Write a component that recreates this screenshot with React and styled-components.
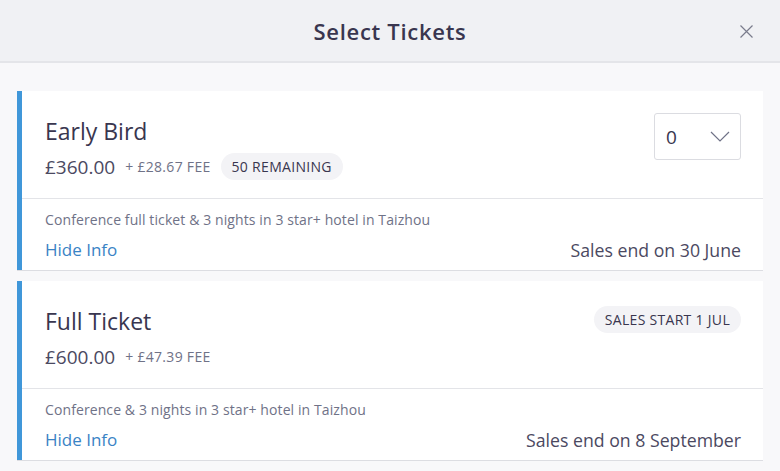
import React from "react";
import styled, { createGlobalStyle } from "styled-components";

const Global = createGlobalStyle`
  html, body { margin: 0; padding: 0; }
  body {
    background: #f8f8fa;
    font-family: "Open Sans", "Liberation Sans", Arial, sans-serif;
    color: #39364f;
    -webkit-font-smoothing: antialiased;
  }
`;

const Page = styled.div`
  width: 780px;
  height: 471px;
  overflow: hidden;
  background: #f8f8fa;
`;

const Header = styled.header`
  height: 61px;
  background: #f0f1f4;
  border-bottom: 2px solid #e4e5e9;
  display: flex;
  align-items: center;
  justify-content: center;
  position: relative;
`;

const Title = styled.h1`
  margin: 0;
  font-size: 22px;
  font-weight: 600;
  letter-spacing: 0.7px;
  color: #39364f;
`;

const Close = styled.button`
  position: absolute;
  right: 26px;
  top: 23px;
  width: 16px;
  height: 16px;
  padding: 0;
  border: 0;
  background: none;
  display: flex;
  align-items: center;
  justify-content: center;
`;

const List = styled.div`
  padding: 28px 17px 0 17px;
  display: flex;
  flex-direction: column;
  gap: 11px;
`;

const Card = styled.div`
  background: #fff;
  border-left: 5px solid #4097d9;
  box-shadow: 0 1px 0 #dcdde2;
`;

const Top = styled.div`
  height: 107px;
  box-sizing: border-box;
  padding: 25px 22px 0 23px;
  display: flex;
  justify-content: space-between;
  align-items: flex-start;
`;

const Info = styled.div`
  display: flex;
  flex-direction: column;
`;

const Name = styled.div`
  font-size: 23px;
  line-height: 30px;
  color: #39364f;
`;

const PriceRow = styled.div`
  margin-top: 7px;
  height: 27px;
  display: flex;
  align-items: center;
`;

const Price = styled.span`
  font-size: 19px;
  color: #4b4961;
`;

const Fee = styled.span`
  margin-left: 10px;
  font-size: 14px;
  letter-spacing: 0.3px;
  color: #6f7287;
`;

const Pill = styled.span`
  display: inline-flex;
  align-items: center;
  height: 27px;
  padding: 0 11px;
  border-radius: 14px;
  background: #f3f3f6;
  font-size: 14px;
  letter-spacing: 0.3px;
  color: #39364f;
  margin-left: ${(p) => (p.$inline ? "10px" : "0")};
  margin-top: ${(p) => (p.$inline ? "0" : "0")};
`;

const Select = styled.div`
  margin-top: -3px;
  width: 87px;
  height: 47px;
  box-sizing: border-box;
  border: 1px solid #dbdce1;
  border-radius: 3px;
  display: flex;
  align-items: center;
  justify-content: space-between;
  padding: 0 10px 0 11px;
  font-size: 19px;
  color: #39364f;
`;

const Bottom = styled.div`
  border-top: 1px solid #e3e4e8;
  padding: 11px 22px 8px 23px;
`;

const Desc = styled.div`
  font-size: 14px;
  line-height: 20px;
  letter-spacing: 0.1px;
  color: #6f7287;
`;

const BottomRow = styled.div`
  margin-top: 8px;
  display: flex;
  justify-content: space-between;
  align-items: center;
  line-height: 24px;
  font-size: 17.7px;
`;

const Link = styled.a`
  color: #3a83c5;
  font-size: 17px;
  text-decoration: none;
  cursor: pointer;
`;

const SalesEnd = styled.span`
  color: #4b4961;
`;

const Chevron = () => (
  <svg width="20" height="11" viewBox="0 0 20 11" fill="none">
    <path d="M1 1 L10 10 L19 1" stroke="#6f7287" strokeWidth="1.2" />
  </svg>
);

const CloseIcon = () => (
  <svg width="13" height="13" viewBox="0 0 13 13">
    <path d="M0.5 0.5 L12.5 12.5 M12.5 0.5 L0.5 12.5" stroke="#7a7c8c" strokeWidth="1.2" />
  </svg>
);

const tickets = [
  {
    name: "Early Bird",
    price: "£360.00",
    fee: "+ £28.67 FEE",
    remaining: "50 REMAINING",
    select: true,
    desc: "Conference full ticket & 3 nights in 3 star+ hotel in Taizhou",
    end: "Sales end on 30 June",
  },
  {
    name: "Full Ticket",
    price: "£600.00",
    fee: "+ £47.39 FEE",
    badge: "SALES START 1 JUL",
    desc: "Conference & 3 nights in 3 star+ hotel in Taizhou",
    end: "Sales end on 8 September",
  },
];

export default function App() {
  return (
    <Page>
      <Global />
      <Header>
        <Title>Select Tickets</Title>
        <Close aria-label="Close">
          <CloseIcon />
        </Close>
      </Header>
      <List>
        {tickets.map((t) => (
          <Card key={t.name}>
            <Top>
              <Info>
                <Name>{t.name}</Name>
                <PriceRow>
                  <Price>{t.price}</Price>
                  <Fee>{t.fee}</Fee>
                  {t.remaining && <Pill $inline>{t.remaining}</Pill>}
                </PriceRow>
              </Info>
              {t.select && (
                <Select>
                  <span>0</span>
                  <Chevron />
                </Select>
              )}
              {t.badge && <Pill>{t.badge}</Pill>}
            </Top>
            <Bottom>
              <Desc>{t.desc}</Desc>
              <BottomRow>
                <Link>Hide Info</Link>
                <SalesEnd>{t.end}</SalesEnd>
              </BottomRow>
            </Bottom>
          </Card>
        ))}
      </List>
    </Page>
  );
}
